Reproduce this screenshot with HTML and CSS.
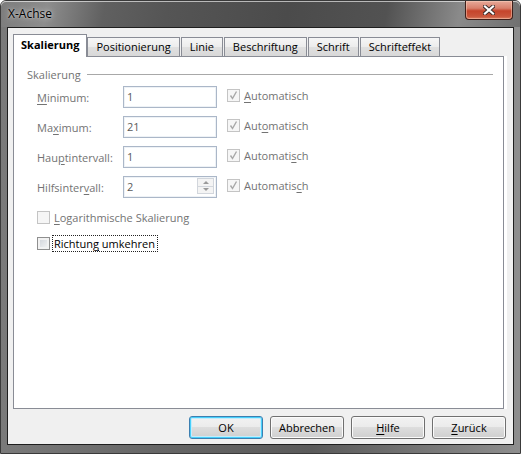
FILE: index.html
```html
<!DOCTYPE html>
<html lang="de">
<head>
  <meta charset="UTF-8" />
  <title>X-Achse</title>
  <link rel="stylesheet" href="styles.css">
</head>
<body>
  <div class="window">
    <div class="titlebar">
      <span class="title">X-Achse</span>
      <div class="close-btn">
        <svg width="12" height="10" viewBox="0 0 12 10">
          <path d="M2 1.5 L10 8.5 M10 1.5 L2 8.5" stroke="#3a2a28" stroke-width="4" stroke-linecap="square" />
          <path d="M2 1.5 L10 8.5 M10 1.5 L2 8.5" stroke="#fff" stroke-width="2.2" stroke-linecap="square" />
        </svg>
      </div>
    </div>

    <div class="client">
      <div class="tabs">
        <div class="tab active">Skalierung</div>
        <div class="tab">Positionierung</div>
        <div class="tab">Linie</div>
        <div class="tab">Beschriftung</div>
        <div class="tab">Schrift</div>
        <div class="tab">Schrifteffekt</div>
      </div>

      <div class="panel">
        <div class="group-head">
          <span>Skalierung</span>
          <div class="rule"></div>
        </div>

        <div class="scale-grid">
          <span class="lbl"><u>M</u>inimum:</span>
          <div class="field">1</div>
          <div class="check disabled">
            <span class="box"><svg width="11" height="11" viewBox="0 0 11 11"><path d="M2.5 5.5 L4.5 8.5 L8.5 1.5" /></svg></span>
            <span class="cap"><u>A</u>utomatisch</span>
          </div>

          <span class="lbl">Ma<u>x</u>imum:</span>
          <div class="field">21</div>
          <div class="check disabled">
            <span class="box"><svg width="11" height="11" viewBox="0 0 11 11"><path d="M2.5 5.5 L4.5 8.5 L8.5 1.5" /></svg></span>
            <span class="cap">Aut<u>o</u>matisch</span>
          </div>

          <span class="lbl">Hau<u>p</u>tintervall:</span>
          <div class="field">1</div>
          <div class="check disabled">
            <span class="box"><svg width="11" height="11" viewBox="0 0 11 11"><path d="M2.5 5.5 L4.5 8.5 L8.5 1.5" /></svg></span>
            <span class="cap">Automati<u>s</u>ch</span>
          </div>

          <span class="lbl">Hilfsinter<u>v</u>all:</span>
          <div class="field">
            <span class="value">2</span>
            <div class="spin">
              <span class="arrow up"></span>
              <span class="arrow down"></span>
            </div>
          </div>
          <div class="check disabled">
            <span class="box"><svg width="11" height="11" viewBox="0 0 11 11"><path d="M2.5 5.5 L4.5 8.5 L8.5 1.5" /></svg></span>
            <span class="cap">Automatis<u>c</u>h</span>
          </div>
        </div>

        <div class="check disabled option log-row">
          <span class="box"></span>
          <span class="cap"><u>L</u>ogarithmische Skalierung</span>
        </div>
        <div class="check option reverse-row">
          <span class="box"></span>
          <span class="cap focused">Richtun<u>g</u> umkehren</span>
        </div>
      </div>

      <div class="buttons">
        <button class="btn default">OK</button>
        <button class="btn">Abbrechen</button>
        <button class="btn"><u>H</u>ilfe</button>
        <button class="btn"><u>Z</u>urück</button>
      </div>
    </div>
  </div>
</body>
</html>
```

FILE: styles.css
```css
body {
  margin: 0;
  background: #fff;
  font-family: "Open Sans", "Noto Sans", sans-serif;
  font-size: 11px;
  color: #000;
}
u {
  text-underline-offset: 2px;
}

/* window frame */
.window {
  width: 521px;
  height: 454px;
  box-sizing: border-box;
  border: 1px solid #3a3a3a;
  border-radius: 6px 6px 0 0;
  display: flex;
  flex-direction: column;
  background:
    linear-gradient(90deg, #7a7a7a 0%, #666 30%, #5a5a5a 60%, #8e8e8e 100%);
  box-shadow: inset 0 1px 0 rgba(255,255,255,0.55);
}
.titlebar {
  height: 26px;
  display: flex;
  justify-content: space-between;
  align-items: flex-start;
  border-radius: 5px 5px 0 0;
  background: linear-gradient(100deg, #7c7c7c 0%, #8d8d8d 9%, #606060 20%, #555 32%, #4b4b4b 55%, #525252 74%, #8a8a8a 88%, #707070 100%);
  box-shadow: inset 0 1px 0 rgba(255,255,255,0.6);
}
.title {
  padding: 5px 0 0 7px;
  font-size: 12px;
  line-height: 16px;
  color: #000;
  text-shadow: 0 0 6px rgba(255,255,255,0.7), 0 0 2px rgba(255,255,255,0.5);
}
.close-btn {
  width: 48px;
  height: 19px;
  box-sizing: border-box;
  margin-right: 7px;
  border: 1px solid #3f1f1a;
  border-top: none;
  border-radius: 0 0 4px 4px;
  display: flex;
  align-items: center;
  justify-content: center;
  background: linear-gradient(#e7a999 0%, #d8806c 40%, #c5442b 55%, #c9553b 85%, #dc7d5f 100%);
  box-shadow: inset 0 0 0 1px rgba(255,220,200,0.45);
}

/* client area */
.client {
  flex: 1;
  margin: 0 6px 8px 6px;
  border: 1px solid #1e1e1e;
  background: #f0f0f0;
  padding: 6px 7px 0 5px;
  display: flex;
  flex-direction: column;
}

.tabs {
  display: flex;
  align-items: flex-end;
  height: 22px;
}
.tab {
  height: 18px;
  line-height: 18px;
  padding: 0 8px;
  border: 1px solid #898c95;
  border-bottom: none;
  background: linear-gradient(#f6f6f6 0%, #ececec 50%, #e0e0e0 50%, #d8d8d8 100%);
}
.tab + .tab {
  margin-left: 1px;
}
.tab.active + .tab {
  margin-left: 0;
}
.tab.active {
  position: relative;
  z-index: 1;
  height: 22px;
  line-height: 20px;
  margin-bottom: -1px;
  padding: 0 7px;
  font-weight: bold;
  background: #fff;
}

.panel {
  width: 491px;
  height: 353px;
  box-sizing: border-box;
  border: 1px solid #898c95;
  background: #fff;
  padding: 10px 10px 0 13px;
  box-shadow: 3px 0 0 #fff;
}

.group-head {
  display: flex;
  align-items: center;
  height: 15px;
  line-height: 15px;
  color: #737373;
}
.group-head .rule {
  flex: 1;
  height: 1px;
  margin-left: 6px;
  background: #a8a8a8;
}

.scale-grid {
  display: grid;
  grid-template-columns: 86px 94px auto;
  grid-auto-rows: 22px;
  row-gap: 8px;
  margin: 4px 0 0 10px;
}
.lbl {
  align-self: center;
  line-height: 15px;
  color: #737373;
}
.field {
  display: flex;
  box-sizing: border-box;
  height: 22px;
  border: 1px solid #abb7c8;
  box-shadow: inset 0 0 0 1px #eef2f6;
  background: #fff;
  padding-left: 3px;
  line-height: 20px;
  color: #5a5a5a;
}
.field .value {
  flex: 1;
}
.spin {
  width: 15px;
  margin: 1px 2px 3px 0;
  border: 1px solid #d2d6dc;
  display: flex;
  flex-direction: column;
  background: #f4f4f4;
}
.arrow {
  flex: 1;
  display: flex;
  align-items: center;
  justify-content: center;
}
.arrow.up {
  border-bottom: 1px solid #d2d6dc;
}
.arrow::before {
  content: "";
  border-left: 3px solid transparent;
  border-right: 3px solid transparent;
}
.arrow.up::before {
  border-bottom: 3px solid #9a9a9a;
}
.arrow.down::before {
  border-top: 3px solid #9a9a9a;
}

/* checkboxes */
.check {
  display: flex;
  align-items: center;
  line-height: 15px;
}
.scale-grid .check {
  align-self: start;
  margin: 1px 0 0 10px;
}
.check .box {
  width: 13px;
  height: 13px;
  box-sizing: border-box;
  margin-right: 2px;
  border: 1px solid #8f8f8f;
  background: linear-gradient(135deg, #cdd1d7, #f7f7f7);
  box-shadow: inset 0 0 0 2px #f2f2f2;
  display: flex;
  align-items: center;
  justify-content: center;
}
.check.disabled .box {
  border-color: #c4c4c4;
  background: #f6f6f6;
  box-shadow: none;
}
.check .box path {
  fill: none;
  stroke: #a8a8a8;
  stroke-width: 1.4;
}
.check .cap {
  border: 1px dotted transparent;
  padding: 0 2px 0 1px;
}
.check.disabled .cap {
  color: #737373;
}
.check .cap.focused {
  border-color: #222;
}
.option {
  margin-left: 10px;
}
.log-row {
  margin-top: 11px;
}
.reverse-row {
  margin-top: 9px;
}

/* dialog buttons */
.buttons {
  display: flex;
  justify-content: flex-end;
  gap: 7px;
  margin-top: 7px;
}
.btn {
  width: 74px;
  height: 23px;
  border: 1px solid #707070;
  border-radius: 3px;
  padding: 0;
  font-family: inherit;
  font-size: 11px;
  color: #000;
  background: linear-gradient(#f2f2f2 0%, #ebebeb 50%, #dddddd 50%, #cfcfcf 100%);
  box-shadow: inset 0 0 0 1px #fbfbfb;
}
.btn.default {
  border-color: #3c7fb1;
  box-shadow: inset 0 0 0 1px #48d0fb, inset 0 0 0 2px #c4ecfc;
}
```
